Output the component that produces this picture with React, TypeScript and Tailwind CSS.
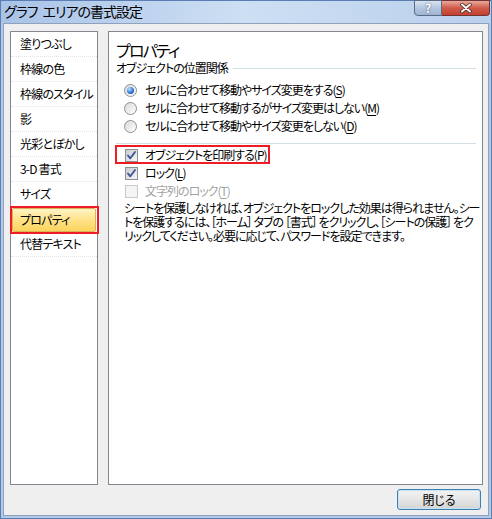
import React from "react";

const F = "font-['Noto_Sans_CJK_JP','Noto_Sans',sans-serif] [font-feature-settings:'palt']";

function Radio({ checked }: { checked?: boolean }) {
  return (
    <span className="w-[13px] h-[13px] rounded-full border border-[#8c8f94] bg-gradient-to-br from-[#d9dadc] to-[#ffffff] flex items-center justify-center shrink-0">
      {checked && (
        <span className="w-[7px] h-[7px] rounded-full bg-[radial-gradient(circle_at_35%_30%,#bfe2ff,#2f7ad6_55%,#0d3f8f)]" />
      )}
    </span>
  );
}

function Check({ checked, disabled }: { checked?: boolean; disabled?: boolean }) {
  return (
    <span
      className={
        disabled
          ? "w-[13px] h-[13px] border border-[#c9c9c9] bg-[#f4f4f4] shrink-0"
          : "w-[13px] h-[13px] border border-[#8e8f8f] bg-gradient-to-br from-[#c9ccd2] to-[#f7f7f7] shrink-0 flex items-center justify-center"
      }
    >
      {checked && (
        <svg width="11" height="11" viewBox="0 0 11 11">
          <path d="M2 5.5 L4.3 8.3 L9 2" fill="none" stroke="#3e5690" strokeWidth="1.9" strokeLinecap="round" strokeLinejoin="round" />
        </svg>
      )}
    </span>
  );
}

function U({ c }: { c: string }) {
  return <span className="underline underline-offset-2">{c}</span>;
}

const items = [
  "塗りつぶし",
  "枠線の色",
  "枠線のスタイル",
  "影",
  "光彩とぼかし",
  "3-D 書式",
  "サイズ",
  "プロパティ",
  "代替テキスト",
];

export default function App() {
  return (
    <div className={`w-[492px] h-[519px] flex flex-col bg-[#b3c9e8] border border-[#5a7db3] text-black ${F}`}>
      {/* Title bar */}
      <div className="h-[22px] flex items-start justify-between bg-gradient-to-r from-[#a9c3e7] via-[#cddff3] to-[#b9cfec] shrink-0">
        <div className="pl-[3px] pt-[1px] text-[14px] leading-[19px] text-black tracking-[-1px] whitespace-nowrap flex">
          <span>グラフ</span>
          <span className="w-[5px]" />
          <span>エリアの書式設定</span>
        </div>
        <div className="flex mr-[1px] -mt-px">
          <div className="w-[28px] h-[16px] border border-[#5a6b86] rounded-bl-[4px] bg-gradient-to-b from-[#dae5f3] via-[#b4c6df] to-[#9fb4d3] flex items-center justify-center text-white text-[12px] font-bold leading-none [text-shadow:0_0_2px_#3b4b66]">?</div>
          <div className="w-[48px] h-[16px] border border-l-0 border-[#6e3434] rounded-br-[4px] bg-gradient-to-b from-[#e9a99b] via-[#cf5a4a] to-[#c2402f] flex items-center justify-center">
            <svg width="12" height="10" viewBox="0 0 12 10">
              <path d="M2 1.5 L10 8.5 M10 1.5 L2 8.5" stroke="#3d1d1d" strokeWidth="3.4" strokeLinecap="round" />
              <path d="M2 1.5 L10 8.5 M10 1.5 L2 8.5" stroke="#ffffff" strokeWidth="2" strokeLinecap="round" />
            </svg>
          </div>
        </div>
      </div>

      {/* Client */}
      <div className="flex-1 mx-[2px] mb-[2px] bg-[#efefef] border border-[#8fa1bd] flex flex-col">
        <div className="flex gap-[10px] pl-[6px] pt-[7px]">
          {/* Left list */}
          <div className="w-[88px] h-[454px] border border-[#828790] bg-white flex flex-col text-[12px] tracking-[-0.8px] whitespace-nowrap">
            {items.map((t, i) => {
              const sel = t === "プロパティ";
              return (
                <div key={i} className="relative h-[25px] shrink-0">
                  {sel ? (
                    <>
                      <div className="absolute left-[1px] right-[1px] top-[1px] bottom-0 rounded-[2px] border border-[#d8b35c] bg-gradient-to-b from-[#fff4c4] via-[#ffe287] to-[#fbd35c] flex items-center pl-[7px]">
                        {t}
                      </div>
                      <div className="absolute -left-px -top-px -right-[2px] -bottom-[2px] border-2 border-[#ee1c25]" />
                    </>
                  ) : (
                    <div className="h-full flex items-center pl-[9px] border-b border-dotted border-[#dde4ee]">{t}</div>
                  )}
                </div>
              );
            })}
          </div>

          {/* Right panel */}
          <div className="w-[375px] h-[454px] border border-[#828790] bg-white flex flex-col pl-[7px] pt-[7px] text-[12px] tracking-[-1px] whitespace-nowrap">
            <div className="h-[22px] text-[16px] leading-[22px] tracking-[-1.8px]">プロパティ</div>
            <div className="h-[14px] flex items-center mr-[6px]">
              <span className="leading-[14px]">オブジェクトの位置関係</span>
              <span className="flex-1 h-px bg-[#d5dfe6] ml-[5px]" />
            </div>
            <div className="mt-[6px] flex flex-col pl-[8px]">
              <div className="h-[18px] flex items-center gap-[8px]">
                <Radio checked />
                <span>セルに合わせて移動やサイズ変更をする(<U c="S" />)</span>
              </div>
              <div className="h-[18px] flex items-center gap-[8px]">
                <Radio />
                <span>セルに合わせて移動するがサイズ変更はしない(<U c="M" />)</span>
              </div>
              <div className="h-[18px] flex items-center gap-[8px]">
                <Radio />
                <span>セルに合わせて移動やサイズ変更をしない(<U c="D" />)</span>
              </div>
            </div>
            <div className="mt-[8px] h-px bg-[#d5dfe6] mr-[6px]" />
            <div className="mt-[2px] flex flex-col pl-[9px]">
              <div className="relative h-[18px] flex items-center gap-[7px]">
                <Check checked />
                <span>オブジェクトを印刷する(<U c="P" />)</span>
                <div className="absolute -left-[10px] -top-[1px] w-[155px] h-[19px] border-2 border-[#ee1c25]" />
              </div>
              <div className="h-[18px] flex items-center gap-[7px]">
                <Check checked />
                <span>ロック(<U c="L" />)</span>
              </div>
              <div className="h-[18px] flex items-center gap-[7px] text-[#a3a3a3]">
                <Check disabled />
                <span>文字列のロック(<U c="T" />)</span>
              </div>
            </div>
            <div className="mt-[1px] pl-[8px] leading-[14px]">
              <div>シートを保護しなければ、オブジェクトをロックした効果は得られません。シー</div>
              <div>トを保護するには、［ホーム］ タブの ［書式］ をクリックし、［シートの保護］ をク</div>
              <div>リックしてください。必要に応じて、パスワードを設定できます。</div>
            </div>
          </div>
        </div>

        <div className="flex justify-end pr-[7px] pt-[4px]">
          <button className="w-[84px] h-[21px] rounded-[3px] border border-[#3c7fb1] bg-gradient-to-b from-[#f2f2f2] via-[#e6e6e6] to-[#d4d4d4] text-[12px] leading-none flex items-center justify-center shadow-[inset_0_0_0_1px_#c6e4f8]">
            閉じる
          </button>
        </div>
      </div>
    </div>
  );
}
